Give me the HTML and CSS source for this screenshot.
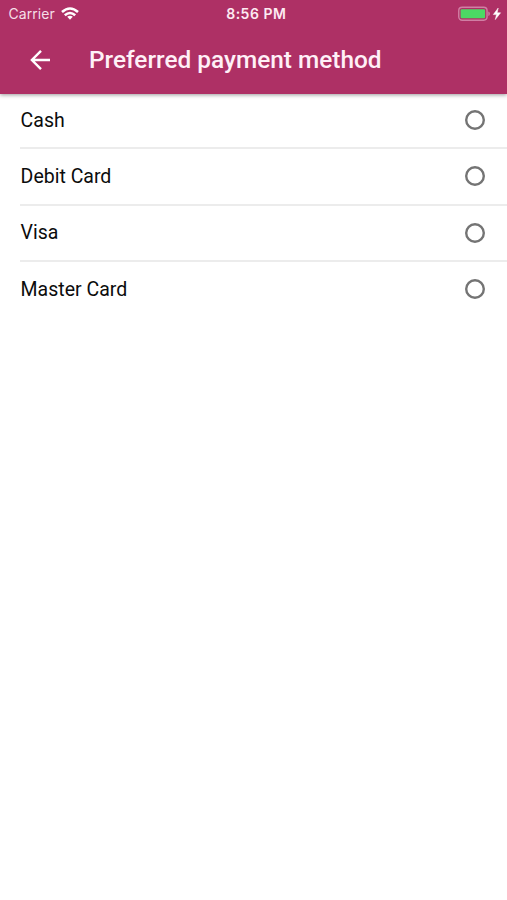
FILE: index.html
```html
<!DOCTYPE html>
<html lang="en">
<head>
<meta charset="utf-8">
<title>Preferred payment method</title>
<link rel="stylesheet" href="styles.css">
</head>
<body>
<header class="header">
  <div class="status">
    <div class="carrier"><span>Carrier</span>
      <svg class="wifi" viewBox="0 0 18 13" width="18" height="13"><g fill="none" stroke="#fff" stroke-width="2.6"><path d="M1 5Q9-2 17 5"/><path d="M3.8 8.2Q9 3.8 14.2 8.2"/></g><path fill="#fff" d="M6.2 9.8Q9 7.6 11.8 9.8L9 12.7z"/></svg>
    </div>
    <time class="time">8:56 PM</time>
    <div class="power">
      <svg viewBox="0 0 44 16" width="44" height="16"><rect x=".75" y="1.25" width="28.3" height="13" rx="3.4" fill="none" stroke="#d07fa4" stroke-width="1.4"/><rect x="2.6" y="3.2" width="24.5" height="9" rx="1.2" fill="#4cd964"/><path fill="#d07fa4" d="M30.3 5.5q1.6.6 1.6 2.3t-1.6 2.3z"/><path fill="#fff" stroke="#fff" stroke-width=".5" d="M40.2 2 35.3 8.6h3.2l-1.2 5 5.3-6.8h-3.4z"/></svg>
    </div>
  </div>
  <div class="toolbar">
    <svg class="back" viewBox="0 0 20 20" width="20" height="20"><path fill="none" stroke="#fff" stroke-width="2.4" d="M20 10H2M11 .9 1.9 10l9.1 9.1"/></svg>
    <h1 class="title">Preferred payment method</h1>
  </div>
</header>
<main class="list">
  <div class="row"><span>Cash</span><svg class="radio" viewBox="0 0 20 20"><circle cx="10" cy="10" r="8.8"/></svg></div>
  <div class="row"><span>Debit Card</span><svg class="radio" viewBox="0 0 20 20"><circle cx="10" cy="10" r="8.8"/></svg></div>
  <div class="row"><span>Visa</span><svg class="radio" viewBox="0 0 20 20"><circle cx="10" cy="10" r="8.8"/></svg></div>
  <div class="row"><span>Master Card</span><svg class="radio" viewBox="0 0 20 20"><circle cx="10" cy="10" r="8.8"/></svg></div>
</main>
</body>
</html>
```
FILE: styles.css
```css
* { box-sizing: border-box; }
body {
  margin: 0;
  height: 900px;
  background: #fff;
  color: #0c0c0c;
  font-family: Roboto, sans-serif;
  overflow: hidden;
}
.header {
  position: relative;
  height: 94px;
  background: #ae3065;
  color: #fff;
  box-shadow: 0 1px 4px rgba(0, 0, 0, .4);
}
.status {
  display: grid;
  grid-template-columns: 1fr auto 1fr;
  align-items: center;
  height: 27px;
  padding: 0 5px 0 8.5px;
  font: 14px/27px Inter, sans-serif;
}
.carrier { display: flex; align-items: center; gap: 7px; color: #f5dfe8; letter-spacing: .07px; }
.wifi { margin-left: -.5px; }
.time { font-size: 14px; font-weight: 600; color: #fdeaf2; letter-spacing: .5px; margin-left: 2px; }
.power { display: flex; justify-content: flex-end; }
.toolbar {
  display: flex;
  align-items: center;
  height: 66px;
  padding-left: 29.5px;
  gap: 39.5px;
}
.title { margin: 0; font-size: 24.4px; font-weight: 500; line-height: 66px; color: #fff0f7; }
.list { padding: 0 0 0 20px; margin-top: -1px; }
.row {
  display: flex;
  align-items: center;
  justify-content: space-between;
  height: 56.3px;
  padding: 0 22px 0 .6px;
  font-size: 19.5px;
  border-bottom: 2px solid #ececec;
}
.row:last-child { border-bottom-color: transparent; }
.radio { width: 20px; height: 20px; fill: none; stroke: #747474; stroke-width: 2.4; }
```
